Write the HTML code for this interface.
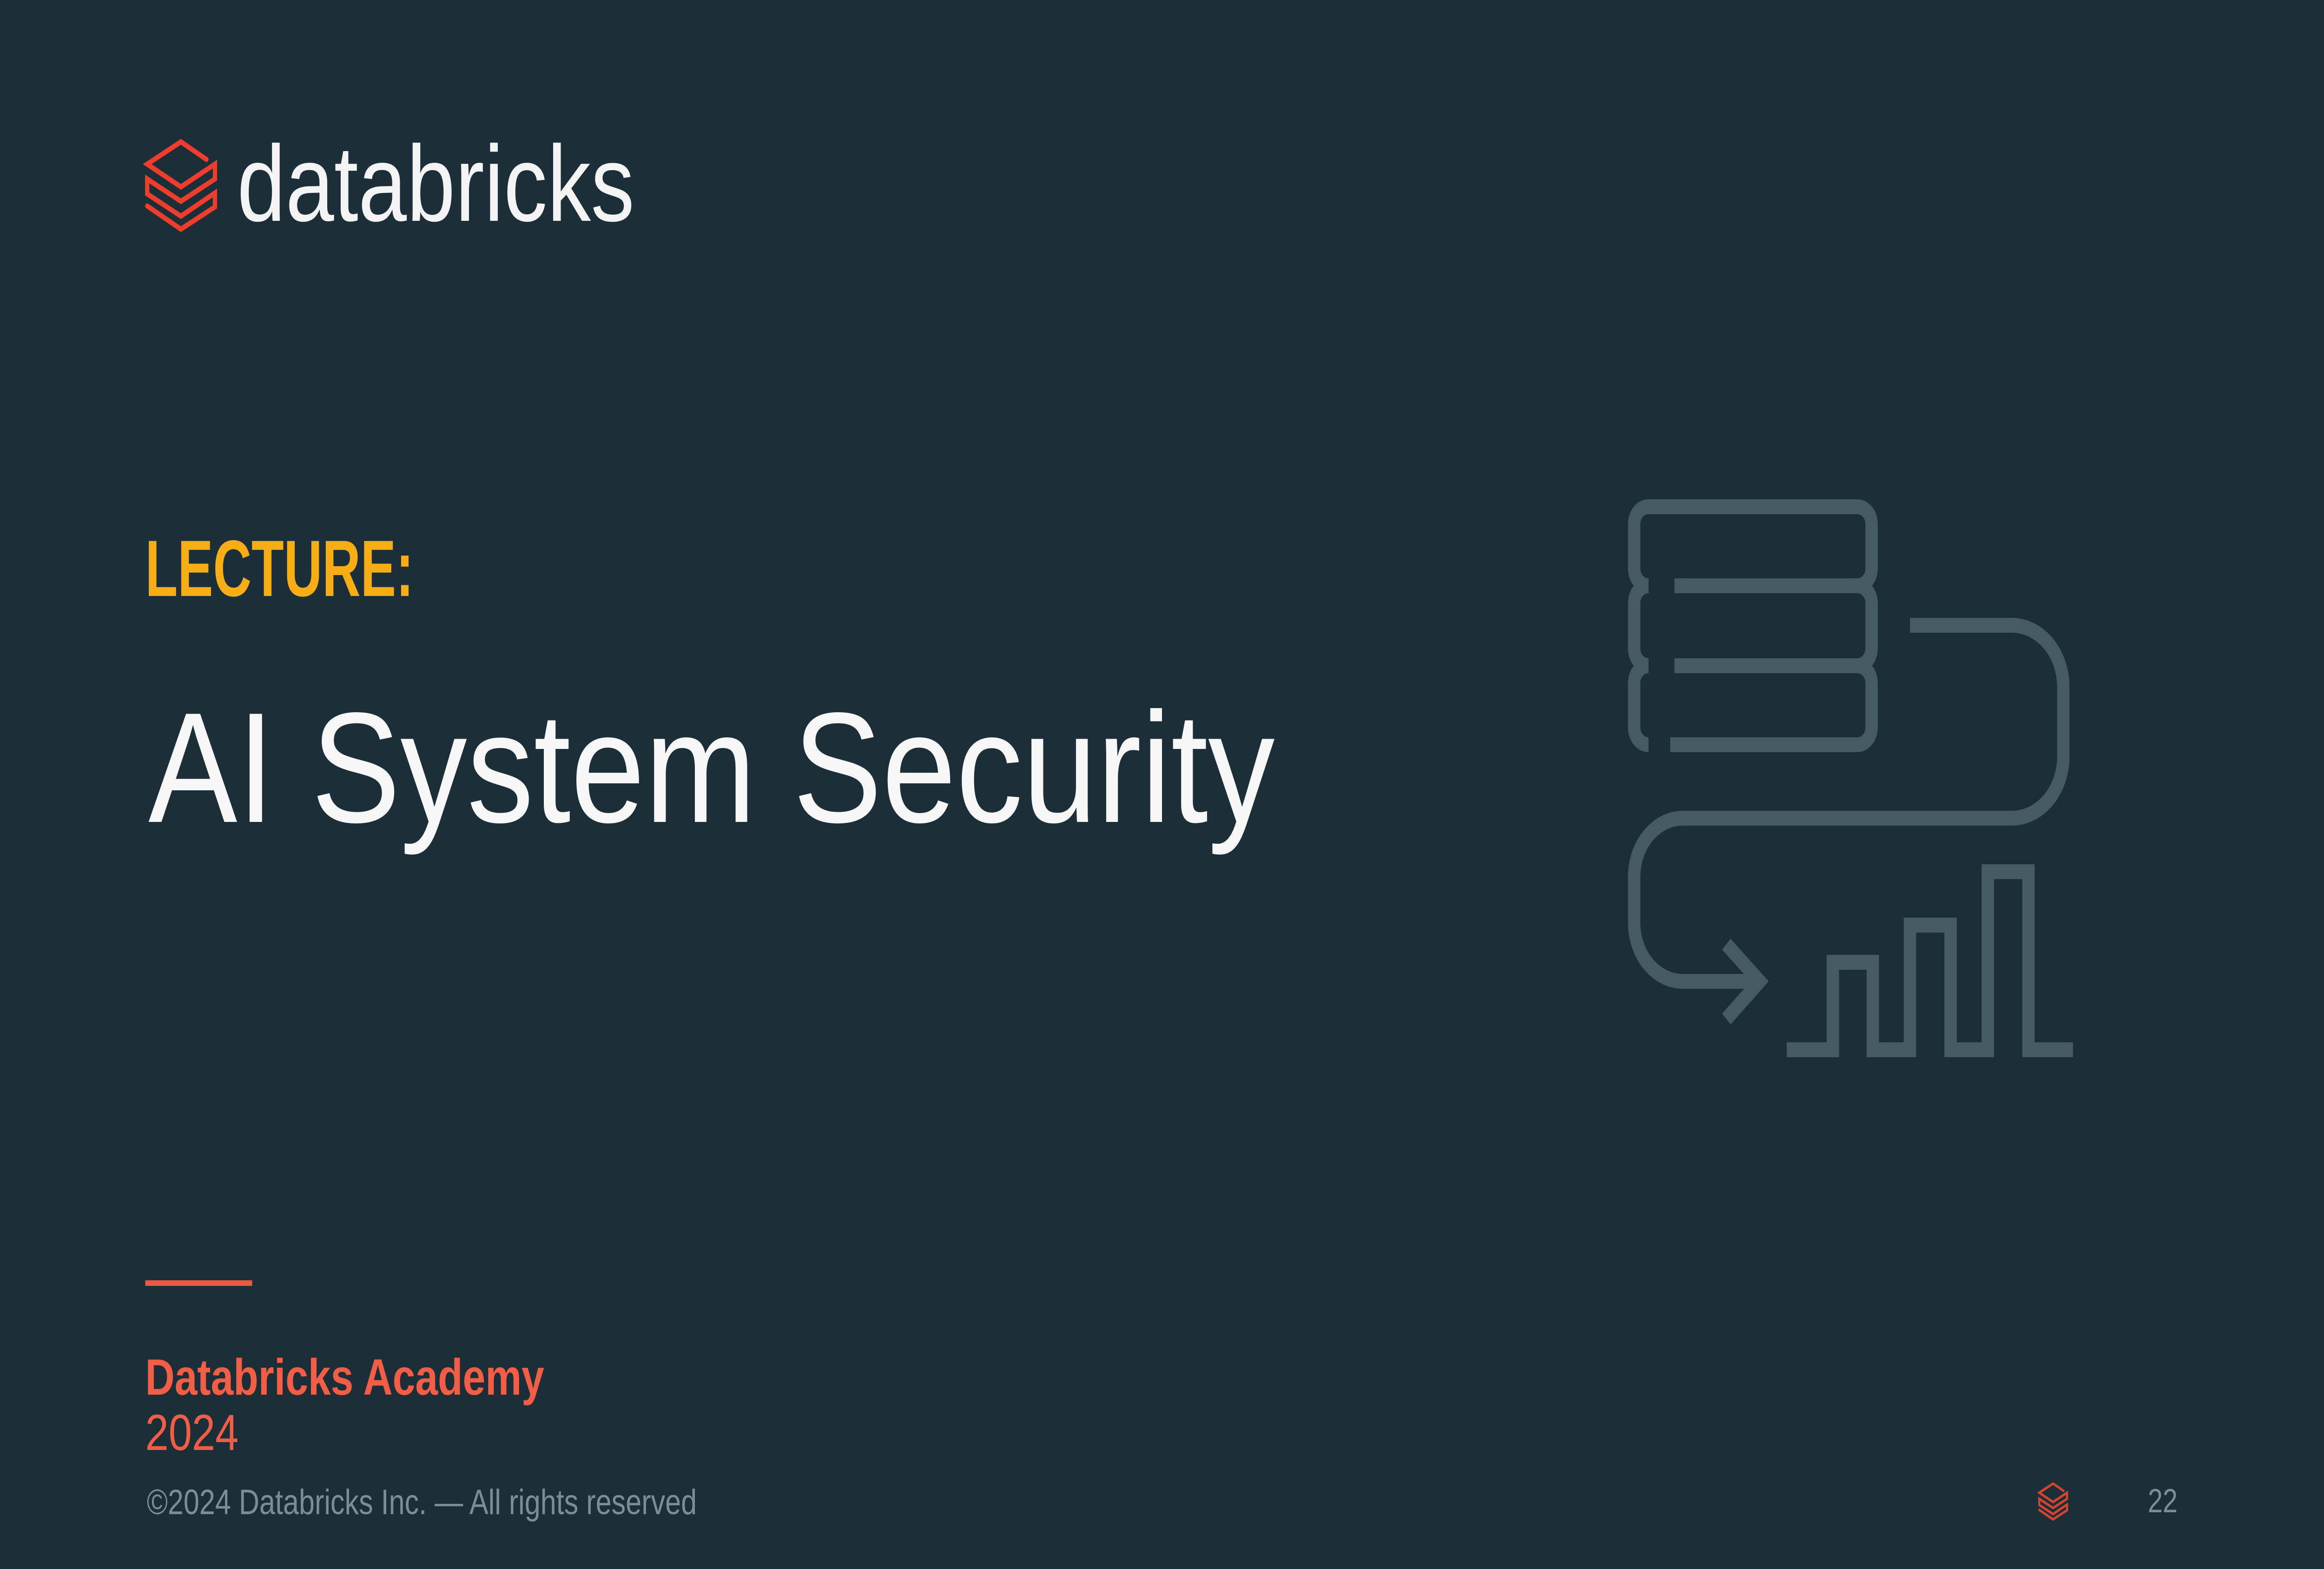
<!DOCTYPE html>
<html><head><meta charset="utf-8"><style>
html,body{margin:0;padding:0;background:#1c2f39;width:100%;height:100%;overflow:hidden;}
svg{display:block;width:100vw;height:100vh}
</style></head><body>
<svg viewBox="0 0 6000 3375" preserveAspectRatio="none" xmlns="http://www.w3.org/2000/svg">
<rect width="6000" height="3375" fill="#1c2f39"/>
<defs>
<polyline id="lg" points="533,343 467,305 380,353 467,402 555,353 555,385 467,433 380,385 380,417 467,465 555,415 555,445 467,493 380,443"/>
</defs>
<use href="#lg" fill="none" stroke="#ee3d2c" stroke-width="11" stroke-linejoin="miter" stroke-linecap="round"/>
<text x="612" y="475" font-family="Liberation Sans, sans-serif" font-size="232" fill="#f4f4f4" textLength="1026" lengthAdjust="spacingAndGlyphs">databricks</text>
<text x="375" y="1282" font-family="Liberation Sans, sans-serif" font-weight="bold" font-size="172" fill="#f8ad14" textLength="693" lengthAdjust="spacingAndGlyphs">LECTURE:</text>
<text x="383" y="1768" font-family="Liberation Sans, sans-serif" font-size="338" fill="#f7f7f7" textLength="2908" lengthAdjust="spacingAndGlyphs">AI System Security</text>
<rect x="375" y="2754" width="276" height="12" fill="#ea5a43"/>
<text x="375" y="3000" font-family="Liberation Sans, sans-serif" font-weight="bold" font-size="110" fill="#f25d45" textLength="1030" lengthAdjust="spacingAndGlyphs">Databricks Academy</text>
<text x="375" y="3119" font-family="Liberation Sans, sans-serif" font-size="110" fill="#f25d45" textLength="241" lengthAdjust="spacingAndGlyphs">2024</text>
<text x="379" y="3257" font-family="Liberation Sans, sans-serif" font-size="76" fill="#7b8e97" textLength="1420" lengthAdjust="spacingAndGlyphs">©2024 Databricks Inc. — All rights reserved</text>
<g transform="translate(5264,3190) scale(0.41) translate(-378,-302)">
<use href="#lg" fill="none" stroke="#d8432f" stroke-width="13" stroke-linejoin="miter" stroke-linecap="round"/>
</g>
<text x="5545" y="3253" font-family="Liberation Sans, sans-serif" font-size="72" fill="#7b8e97" textLength="77" lengthAdjust="spacingAndGlyphs">22</text>
<g fill="none" stroke="#465a63" stroke-width="32" stroke-linejoin="miter" stroke-linecap="butt">
<path d="M4256,1260 A37,37 0 0 1 4219,1223 V1127 A37,37 0 0 1 4256,1090 H4795 A37,37 0 0 1 4832,1127 V1223 A37,37 0 0 1 4795,1260 H4323"/>
<path d="M4256,1432 A37,37 0 0 1 4219,1395 V1297 A37,37 0 0 1 4256,1260 M4795,1260 A37,37 0 0 1 4832,1297 V1395 A37,37 0 0 1 4795,1432 H4323"/>
<path d="M4256,1602 A37,37 0 0 1 4219,1565 V1469 A37,37 0 0 1 4256,1432 M4795,1432 A37,37 0 0 1 4832,1469 V1565 A37,37 0 0 1 4795,1602 H4312"/>
<path d="M4931,1345 H5194 A133,133 0 0 1 5327,1478 V1627 A133,133 0 0 1 5194,1760 H4345 A126,126 0 0 0 4219,1886 V1985 A126,126 0 0 0 4345,2111 H4550"/>
<path d="M4457,2031 L4543,2111 L4457,2192"/>
<path d="M4613,2258 H4732 V2070 H4835 V2258 H4931 V1990 H5036 V2258 H5132 V1875 H5237 V2258 H5352"/>
</g>
</svg>
</body></html>
